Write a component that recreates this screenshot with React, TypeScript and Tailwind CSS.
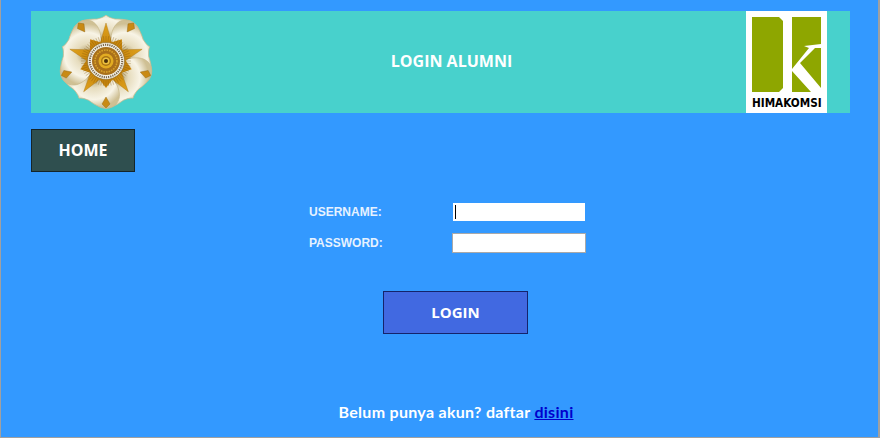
const petals = [0, 72, 144, 216, 288]
const rays = Array.from({ length: 60 }, (_, i) => i * 6)

function Emblem() {
  return (
    <svg width="100" height="94" viewBox="-50 -46 100 94">
      <defs>
        <radialGradient id="petal" gradientUnits="userSpaceOnUse" cx="0" cy="-20" r="31">
          <stop offset="0%" stopColor="#a8935c" />
          <stop offset="35%" stopColor="#e6dcbd" />
          <stop offset="72%" stopColor="#f8f4e6" />
          <stop offset="100%" stopColor="#cfc094" />
        </radialGradient>
        <linearGradient id="gold" x1="0" y1="0" x2="0" y2="1">
          <stop offset="0%" stopColor="#e0a21c" />
          <stop offset="100%" stopColor="#c8860d" />
        </linearGradient>
      </defs>
      <circle r="37" fill="#e6dcbd" />
      {petals.map((a) => (
        <path
          key={a}
          transform={`rotate(${a})`}
          d="M0 -6 C-16 -8 -37 -16 -33 -31 C-30 -42 -15 -42 -9 -42 C-5 -43 -2 -44 0 -46 C2 -44 5 -43 9 -42 C15 -42 30 -42 33 -31 C37 -16 16 -8 0 -6Z"
          fill="url(#petal)"
          stroke="#c9b98c"
          strokeWidth="0.7"
        />
      ))}
      {petals.map((a) => (
        <path key={a} transform={`rotate(${a + 36})`} d="M0 -47 L4 -43 L0 -36 L-4 -43Z" fill="#c98a14" stroke="#8f6410" strokeWidth="0.4" />
      ))}
      {petals.map((a) => (
        <path key={a} transform={`rotate(${a})`} d="M0 -38 L7 -14 L-7 -14Z" fill="url(#gold)" stroke="#a87514" strokeWidth="0.4" />
      ))}
      {petals.map((a) => (
        <path key={a} transform={`rotate(${a + 36})`} d="M0 -27 L13 -10 L-13 -10Z" fill="#c8860d" />
      ))}
      {rays.map((a) => (
        <line key={a} transform={`rotate(${a})`} x1="0" y1="-18" x2="0" y2="-25" stroke="#7d5208" strokeWidth="0.5" opacity="0.6" />
      ))}
      <circle r="18.5" fill="#f3efe2" stroke="#8c6a2a" strokeWidth="0.6" />
      <circle r="16.2" fill="none" stroke="#77644a" strokeWidth="2" strokeDasharray="1.2 1" />
      <circle r="14" fill="#a9701a" />
      <circle r="11" fill="none" stroke="#d9a22a" strokeWidth="1.6" strokeDasharray="1.6 1" />
      <circle r="7.5" fill="#e2ac22" />
      <circle r="5" fill="#a87414" />
      <circle r="3.6" fill="#edc23f" />
      <circle r="2" fill="#4a300a" />
    </svg>
  )
}

function HimakomsiLogo() {
  return (
    <div className="h-[102px] w-[81px] bg-white pt-[6px] pl-[5px]">
      <svg width="74" height="94" viewBox="0 0 74 94" className="block">
        <g transform="translate(1 0)">
          <path d="M0 0H27L31 4V71L27 75H0Z" fill="#8ea600" />
          <path d="M40 0H69V75H40Z" fill="#8ea600" />
          <path d="M40 52L57 31L52 29L69 27V31L63 31L48 46L69 71V75H59L40 54Z" fill="#fff" />
        </g>
        <text transform="translate(1 90) scale(1 1.2)" fontSize="10.5" fontWeight="900" fill="#000" fontFamily="'DejaVu Sans', sans-serif">HIMAKOMSI</text>
      </svg>
    </div>
  )
}

export default function App() {
  return (
    <div className="h-[438px] w-[880px] overflow-hidden border-r-2 border-b border-l border-[#a0a0a0] bg-[#3399ff] pt-[11px] pr-[28px] pl-[30px]">
      <div className="flex h-[102px] items-center bg-[#48d1cc]">
        <div className="ml-[25px] flex w-[101px] items-center">
          <Emblem />
        </div>
        <h1 className="flex-1 pb-[2px] text-center text-base font-bold text-white [font-family:'Open_Sans',sans-serif]">LOGIN ALUMNI</h1>
        <div className="mr-[23px]">
          <HimakomsiLogo />
        </div>
      </div>

      <button className="mt-4 flex h-[43px] w-[104px] items-center justify-center border border-[#14252b] bg-[#2f4f4f] pb-[2px] text-base font-bold text-white [font-family:'Open_Sans',sans-serif]">
        HOME
      </button>

      <div className="mt-[31px] ml-[278px] flex w-[277px] flex-col gap-3">
        <div className="flex h-[18px] items-center justify-between">
          <label className="text-xs font-bold text-[#e6f2ff] [font-family:'Liberation_Sans',sans-serif]">USERNAME:</label>
          <div className="relative mr-px">
            <input className="block h-[18px] w-[132px] bg-white outline-none" />
            <span className="absolute top-[2px] left-[2px] h-[14px] w-px bg-black" />
          </div>
        </div>
        <div className="flex h-5 items-center justify-between">
          <label className="text-xs font-bold text-[#e6f2ff] [font-family:'Liberation_Sans',sans-serif]">PASSWORD:</label>
          <input type="password" className="h-5 w-[134px] border border-[#a9a9a9] bg-white outline-none" />
        </div>
      </div>

      <button className="mt-[38px] ml-[352px] flex h-[43px] w-[145px] items-center justify-center border border-[#14246b] bg-[#4169e1] text-[15px] font-bold text-white [font-family:'Open_Sans',sans-serif]">
        LOGIN
      </button>

      <p className="mt-[66px] pl-[31px] text-center text-base font-bold tracking-[0.3px] text-white [font-family:Lato,sans-serif]">
        Belum punya akun? daftar <a href="#" className="text-[#0000cc] underline">disini</a>
      </p>
    </div>
  )
}
